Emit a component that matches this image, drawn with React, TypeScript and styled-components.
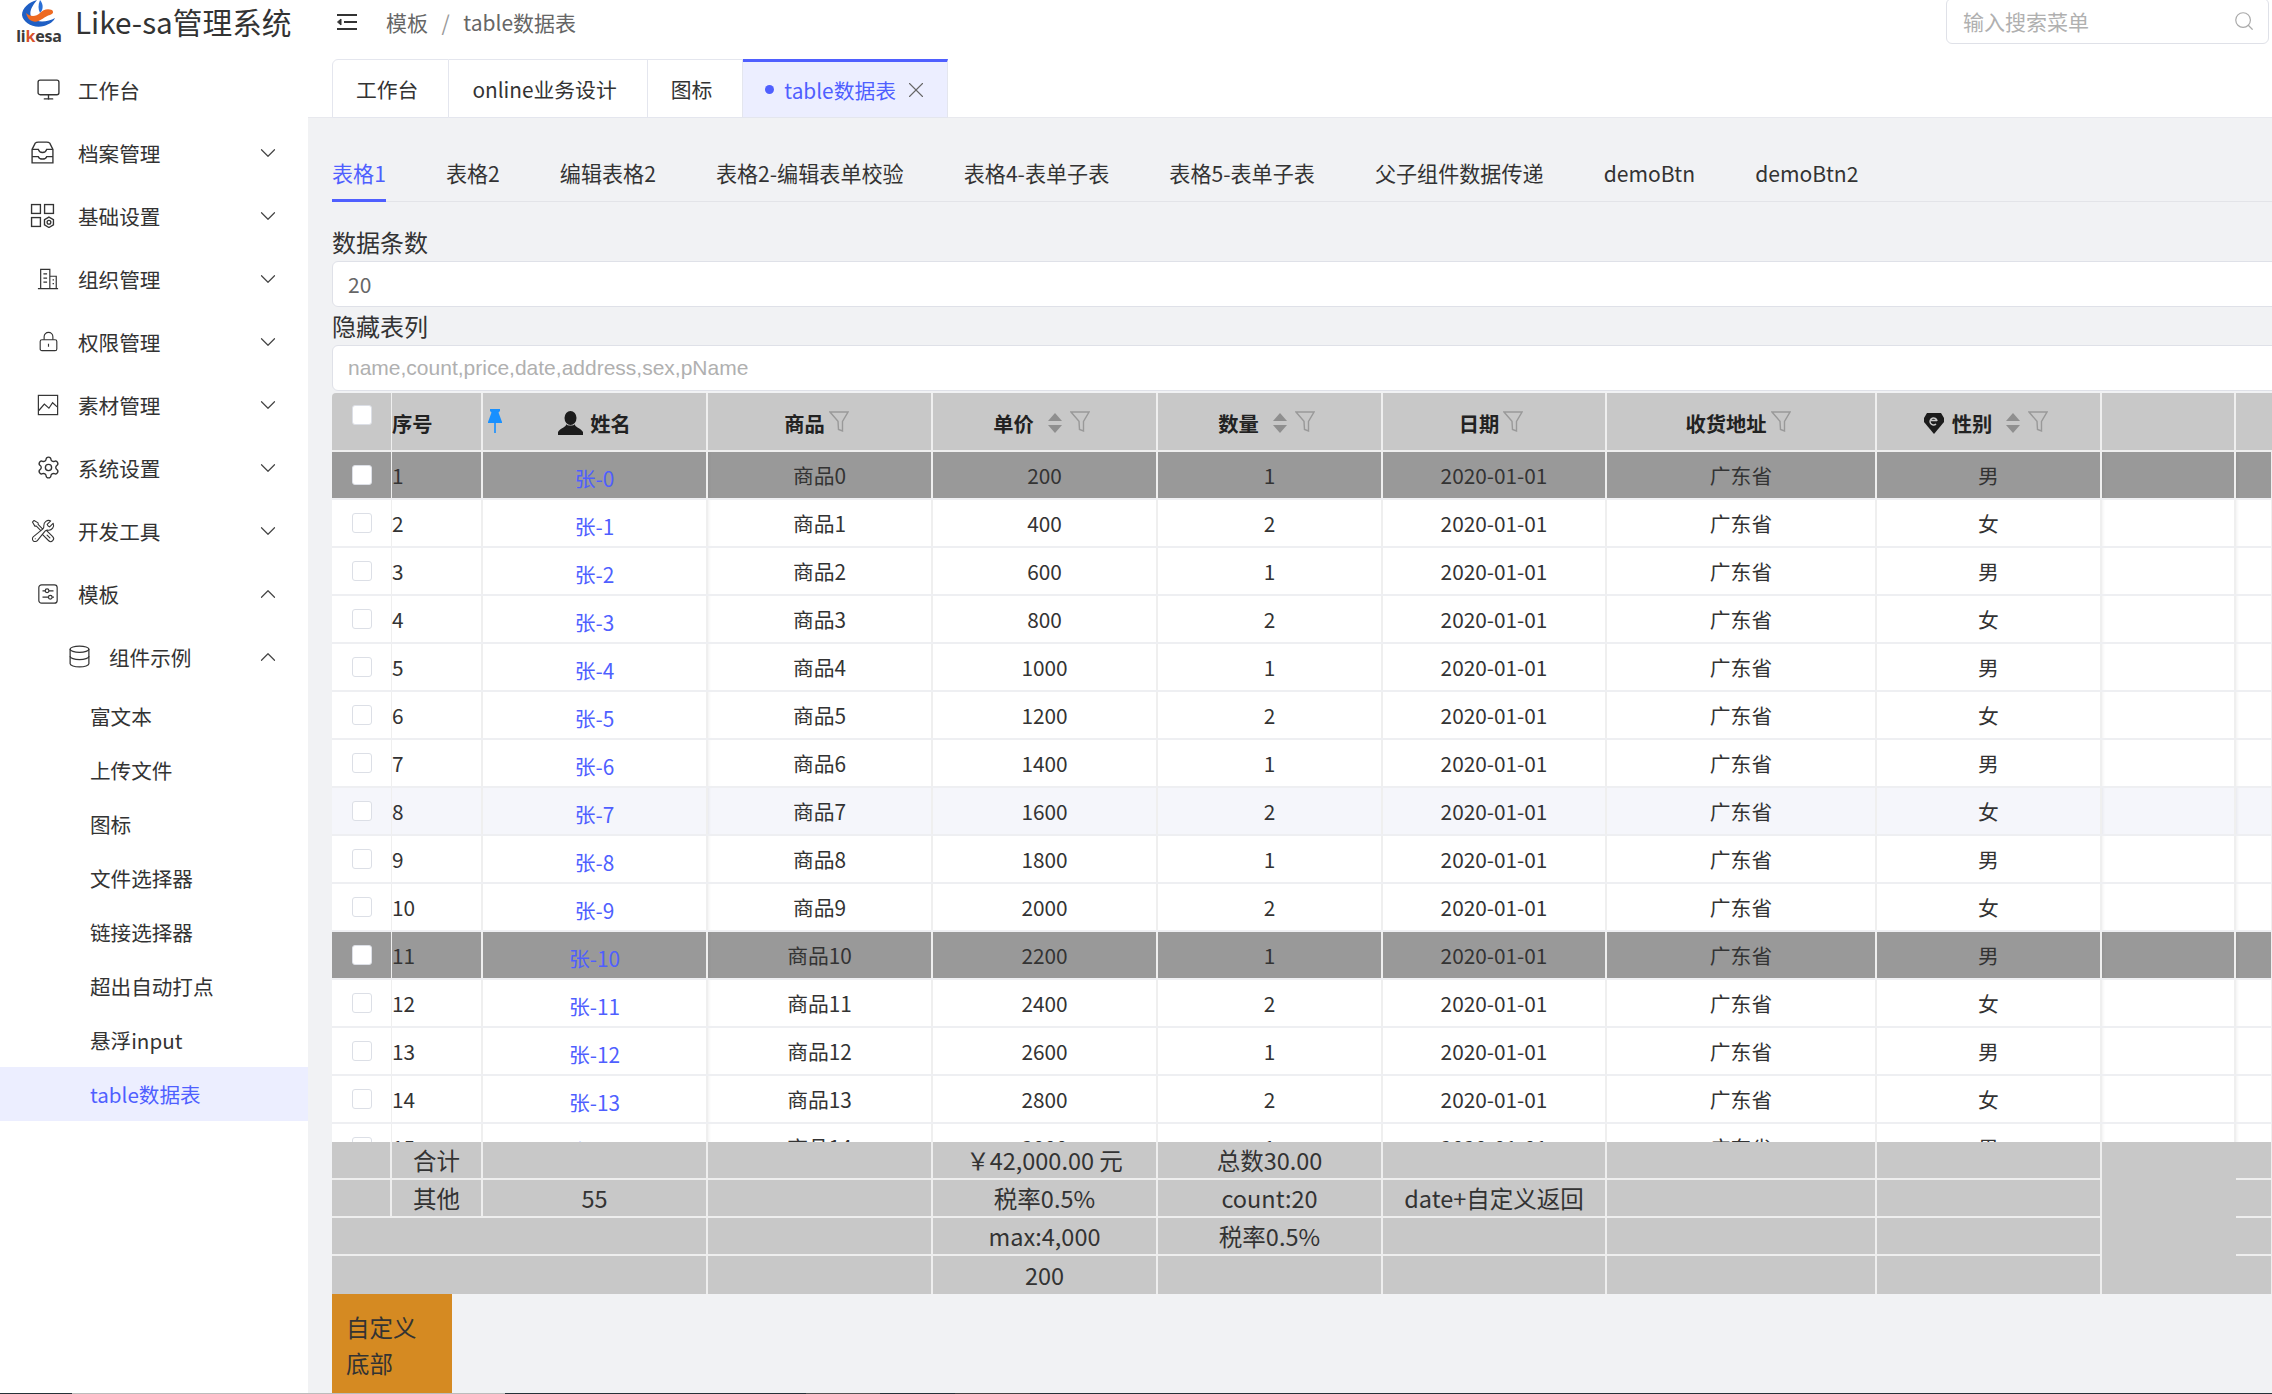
import React from "react";
import styled, { createGlobalStyle, css } from "styled-components";
import { ChevronDown, ChevronUp, Database, Monitor, Search, Settings, X } from "lucide-react";
import { HiOutlineWrenchScrewdriver } from "react-icons/hi2";

const GlobalStyle = createGlobalStyle`
  html, body { margin: 0; padding: 0; background: #fff; }
  * { box-sizing: border-box; }
  body { font-family: "Noto Sans CJK SC", "Noto Sans", sans-serif; color: #333; }
`;

const columns = "60px 91px 225px 225px 225px 225px 224px 270px 225px 134px 37px";

const Page = styled.div`
  width: 2272px;
  height: 1394px;
  overflow: hidden;
  display: flex;
  flex-direction: column;
`;

const Body = styled.div`
  flex: 1;
  min-height: 0;
  display: flex;
`;

const BottomStrip = styled.div`
  height: 1px;
  display: flex;
`;

const StripPart = styled.div<{ $w: number; $c: string }>`
  width: ${(p) => p.$w}px;
  background: ${(p) => p.$c};
`;

/* sidebar */
const Sidebar = styled.aside`
  width: 308px;
  flex-shrink: 0;
  background: #fff;
`;

const Brand = styled.div`
  height: 59px;
  display: flex;
  align-items: flex-start;
  padding-left: 18px;
`;

const LogoBox = styled.div`
  width: 42px;
  display: flex;
  flex-direction: column;
  align-items: center;
`;

const LogoText = styled.div`
  font-family: "Noto Sans", sans-serif;
  font-weight: 700;
  font-size: 16px;
  line-height: 16px;
  letter-spacing: -0.2px;
  color: #3a3a3a;
  span { color: #d8502a; }
`;

const Title = styled.div`
  margin-left: 15px;
  font-size: 29.7px;
  line-height: 44px;
  color: #333;
  white-space: nowrap;
`;

const MenuItem = styled.div<{ $inset: number }>`
  height: 63px;
  display: flex;
  align-items: center;
  padding: 0 27px 2px ${(p) => p.$inset}px;
  font-size: 20.6px;
  color: #333;
`;

const MenuIcon = styled.div<{ $width: number; $pad: number }>`
  width: ${(p) => p.$width}px;
  padding-left: ${(p) => p.$pad}px;
  display: flex;
  align-items: center;
  color: #333;
`;

const MenuLabel = styled.div`
  flex: 1;
`;

const Leaf = styled.div<{ $active?: boolean }>`
  height: 54px;
  display: flex;
  align-items: center;
  padding: 0 0 1px 90px;
  font-size: 20.6px;
  color: ${(p) => (p.$active ? "#4f5fff" : "#333")};
  background: ${(p) => (p.$active ? "#eceeff" : "transparent")};
`;

const Chevron = styled.div`
  display: flex;
  color: #444;
`;

/* right side */
const Main = styled.main`
  flex: 1;
  min-width: 0;
  display: flex;
  flex-direction: column;
  overflow: hidden;
  background: #f1f2f4;
`;

const TopBar = styled.div`
  height: 118px;
  flex-shrink: 0;
  background: #fff;
  border-bottom: 1px solid #e8e9ee;
`;

const TopRow = styled.div`
  height: 59px;
  display: flex;
  align-items: flex-start;
  padding-left: 28px;
`;

const Crumbs = styled.div`
  height: 44px;
  flex: 1;
  display: flex;
  align-items: center;
  padding-bottom: 1px;
  font-size: 21px;
  color: #666;
`;

const CrumbSep = styled.span`
  margin: 0 13.5px;
  color: #999;
`;

const FoldButton = styled.svg`
  margin-right: 28px;
`;

const SearchBox = styled.div`
  width: 323px;
  height: 46px;
  margin: -2px 3px 0 0;
  padding: 0 13px 0 16px;
  background: #fff;
  border: 1px solid #dfe1e8;
  border-radius: 6px;
  display: flex;
  align-items: center;
  justify-content: space-between;
  font-size: 21px;
  color: #b0b0b0;
`;

const PageTabs = styled.div`
  height: 59px;
  margin-left: 24px;
  display: flex;
`;

const PageTab = styled.div<{ $active?: boolean }>`
  display: flex;
  align-items: center;
  padding: 0 30px 0 23px;
  font-size: 20.8px;
  background: #fff;
  border: 1px solid #e4e6ee;
  border-left-width: 0;
  color: #333;
  &:first-child {
    border-left-width: 1px;
    border-top-left-radius: 6px;
  }
  ${(p) =>
    p.$active &&
    css`
      padding: 0 18px 0 22px;
      background: #eceeff;
      color: #4f5fff;
      border-top: 3px solid #4f5fff;
    `}
`;

const Dot = styled.span`
  width: 9px;
  height: 9px;
  margin-right: 10px;
  border-radius: 50%;
  background: #4f5fff;
`;

const TabClose = styled.span`
  display: flex;
  margin-left: 7px;
  color: #666;
`;

const Content = styled.div`
  padding-left: 24px;
  width: 2000px;
`;

const InnerTabs = styled.div`
  height: 56px;
  margin-top: 28px;
  display: flex;
  gap: 60px;
  border-bottom: 1px solid #e3e4e8;
`;

const InnerTab = styled.div<{ $active?: boolean }>`
  height: 56px;
  display: flex;
  align-items: center;
  font-size: 21.1px;
  color: ${(p) => (p.$active ? "#4f5fff" : "#333")};
  border-bottom: 3px solid ${(p) => (p.$active ? "#4f5fff" : "transparent")};
`;

const Form = styled.div`
  margin-top: 25px;
`;

const FieldLabel = styled.div`
  height: 34px;
  line-height: 30px;
  font-size: 24px;
  color: #333;
`;

const FieldBox = styled.div<{ $placeholder?: boolean }>`
  height: 46px;
  margin-bottom: 4px;
  padding-left: 15px;
  display: flex;
  align-items: center;
  background: #fff;
  border: 1px solid #dfe1e8;
  border-radius: 6px;
  font-size: 21px;
  color: #666;
  ${(p) =>
    p.$placeholder &&
    css`
      font-family: "Liberation Sans", Arial, sans-serif;
      color: #b0b0b0;
    `}
`;

/* table */
const TableWrap = styled.div`
  margin-top: -2px;
  width: 1941px;
  font-size: 20.8px;
`;

const HeadRow = styled.div`
  display: grid;
  grid-template-columns: ${columns};
  height: 59px;
  background: #c8c8c8;
  border-bottom: 2px solid #eeeeee;
  border-top-left-radius: 4px;
`;

const HeadCell = styled.div<{ $left?: boolean; $thin?: boolean; $none?: boolean }>`
  position: relative;
  display: flex;
  align-items: center;
  justify-content: ${(p) => (p.$left ? "flex-start" : "center")};
  font-size: 20.3px;
  font-weight: 700;
  color: #222;
  border-right: ${(p) => (p.$none ? "0" : p.$thin ? "1px" : "2px")} solid #efefef;
  padding-top: 2px;
`;

const HeadText = styled.span`
  margin: 0 4px 0 0;
`;

const PinMark = styled.svg`
  position: absolute;
  left: 4px;
  top: 16px;
`;

const HeadGlyph = styled.svg`
  margin-right: 7px;
  flex-shrink: 0;
`;

const SortMark = styled.svg`
  margin: 0 7px 0 13px;
  flex-shrink: 0;
`;

const FilterMark = styled.svg`
  margin: -2px 6px 0 0;
  flex-shrink: 0;
`;

const Rows = styled.div`
  height: 690px;
  overflow: hidden;
`;

const Row = styled.div<{ $selected?: boolean; $hover?: boolean }>`
  display: grid;
  grid-template-columns: ${columns};
  height: 48px;
  border-bottom: 2px solid #eeeff2;
  background: ${(p) => (p.$selected ? "#999999" : p.$hover ? "#f5f6fb" : "#fff")};
`;

const Cell = styled.div<{ $left?: boolean; $thin?: boolean; $shadow?: boolean }>`
  display: flex;
  align-items: center;
  justify-content: ${(p) => (p.$left ? "flex-start" : "center")};
  border-right: ${(p) => (p.$thin ? "1px" : "2px")} solid #efefef;
  color: #333;
  ${(p) => p.$shadow && "box-shadow: inset 3px 0 3px -2px rgba(0, 0, 0, 0.06);"}
`;

const NameLink = styled.a`
  color: #4f5fff;
  padding-top: 5px;
`;

const Check = styled.div<{ $up?: boolean }>`
  width: 20px;
  height: 20px;
  background: #fff;
  border: 1px solid #dcdfe6;
  border-radius: 3px;
  ${(p) => p.$up && "margin-top: -16px;"}
`;

const Footer = styled.div`
  display: grid;
  grid-template-columns: ${columns};
  grid-auto-rows: 38px;
  height: 152px;
  font-size: 23.5px;
  background: #c8c8c8;
  color: #333;
`;

const FootCell = styled.div<{ $span?: number; $rows?: number; $last?: boolean; $bare?: boolean }>`
  display: flex;
  align-items: center;
  justify-content: center;
  grid-column: span ${(p) => p.$span ?? 1};
  grid-row: span ${(p) => p.$rows ?? 1};
  white-space: nowrap;
  border-right: ${(p) => (p.$bare ? "0" : "2px solid #eeeeee")};
  border-bottom: ${(p) => (p.$last || p.$bare ? "0" : "2px solid #eeeeee")};
`;

const CustomFoot = styled.div`
  width: 120px;
  height: 99px;
  padding: 15px 14px 0;
  background: #d58a22;
  font-size: 23.5px;
  line-height: 36px;
  color: #333;
`;

/* drawings */
const MenuGlyph: React.FC<{ children: React.ReactNode; size: number }> = ({ children, size }) => (
  <svg width={size} height={size} viewBox="0 0 24 24" fill="none" stroke="currentColor" strokeWidth="1.3">
    {children}
  </svg>
);

const Logo = () => (
  <svg width="34" height="28" viewBox="0 0 34 28">
    <path d="M15 0C7 2 0 8 0 15c1 8 12 14 22 11 6-2 10-5 11-8-7 4-18 5-23 0C6 13 10 6 15 0Z" fill="#1f5fc4" />
    <path d="M18 0c-2 5-2 9 0 13 3-3 4-8 0-13Z" fill="#2a6fd6" />
    <path d="M4 13c4 4 10 4 14 0 3-3 7-5 12-3 2 2 1 4-2 5-6 1-11 9-18 6-3-1-5-4-6-8Z" fill="#ee6a22" />
  </svg>
);

const FilterIcon = () => (
  <FilterMark width="20" height="22" viewBox="0 0 20 22" fill="none" stroke="#999" strokeWidth="1.4">
    <path d="M1 1h18l-5.500 9.500V20l-4-1.600-.5-8z" />
  </FilterMark>
);

const SortIcon = () => (
  <SortMark width="16" height="22" viewBox="0 0 16 22" fill="#8f8f8f">
    <path d="M8 1l7 8H1z" />
    <path d="M8 21l7-8H1z" />
  </SortMark>
);

const menuTop = [
  {
    label: "工作台",
    pad: 6,
    icon: <Monitor size={25} strokeWidth={1.3} />,
    plain: true,
  },
  {
    label: "档案管理",
    pad: 0,
    icon: (
      <MenuGlyph size={25}>
        <path d="M2 9l3-6c1-1 2-1 3-1h8c1 0 2 0 3 1l3 6v13H2z" />
        <path d="M2 9h6c1 4 7 4 8 0h6M2 16h6c1 3 7 3 8 0h6" />
      </MenuGlyph>
    ),
  },
  {
    label: "基础设置",
    pad: 0,
    icon: (
      <MenuGlyph size={25}>
        <rect x="1.5" y="1.5" width="8.5" height="8.5" />
        <rect x="14" y="1.5" width="8.5" height="8.5" />
        <rect x="1.5" y="14" width="8.5" height="8.5" />
        <path d="M18.2 13.5l4.3 2.5v5l-4.3 2.5-4.3-2.5v-5z" />
        <circle cx="18.2" cy="18.5" r="1.8" />
      </MenuGlyph>
    ),
  },
  {
    label: "组织管理",
    pad: 7,
    icon: (
      <MenuGlyph size={22}>
        <path d="M1 22.5h22M4 22.5V1.5h10v21M14 9h7v13.5" />
        <path d="M7 6.5h4M7 11h4M7 15.5h4M17 13h1.5M17 17h1.5" />
      </MenuGlyph>
    ),
  },
  {
    label: "权限管理",
    pad: 8,
    icon: (
      <MenuGlyph size={21}>
        <rect x="2.5" y="10" width="19" height="12.5" rx="2" />
        <path d="M7 10V6.500a5 5 0 0 1 10 0V10M12 14.500v3.500" />
      </MenuGlyph>
    ),
  },
  {
    label: "素材管理",
    pad: 7,
    icon: (
      <MenuGlyph size={22}>
        <rect x="1.5" y="1.5" width="21" height="21" />
        <path d="M2 18l6-7 5 4.500 4-6 5 4.500" />
      </MenuGlyph>
    ),
  },
  { label: "系统设置", pad: 6, icon: <Settings size={25} strokeWidth={1.3} /> },
  { label: "开发工具", pad: 0, icon: <HiOutlineWrenchScrewdriver size={26} strokeWidth={1} /> },
];

const leaves = ["富文本", "上传文件", "图标", "文件选择器", "链接选择器", "超出自动打点", "悬浮input", "table数据表"];
const innerTabs = ["表格1", "表格2", "编辑表格2", "表格2-编辑表单校验", "表格4-表单子表", "表格5-表单子表", "父子组件数据传递", "demoBtn", "demoBtn2"];
const rowData = Array.from({ length: 15 }, (_, i) => i);
const stripParts: [number, string][] = [
  [72, "#263238"],
  [433, "#bcbcbc"],
  [301, "#263238"],
  [74, "#555"],
  [75, "#263238"],
  [75, "#444"],
  [1242, "#263238"],
];

export default function App() {
  return (
    <Page>
      <GlobalStyle />
      <Body>
        <Sidebar>
          <Brand>
            <LogoBox>
              <Logo />
              <LogoText>
                li<span>k</span>esa
              </LogoText>
            </LogoBox>
            <Title>Like-sa管理系统</Title>
          </Brand>
          {menuTop.map((m) => (
            <MenuItem key={m.label} $inset={30}>
              <MenuIcon $width={48} $pad={m.pad}>
                {m.icon}
              </MenuIcon>
              <MenuLabel>{m.label}</MenuLabel>
              {!m.plain && (
                <Chevron>
                  <ChevronDown size={26} strokeWidth={1.1} />
                </Chevron>
              )}
            </MenuItem>
          ))}
          <MenuItem $inset={30}>
            <MenuIcon $width={48} $pad={7}>
              <MenuGlyph size={22}>
                <rect x="2" y="2" width="20" height="20" rx="3" />
                <path d="M6 8.500h3M13 8.500h5M6 15.500h6M16.500 15.500h2" />
                <circle cx="11" cy="8.500" r="2" />
                <circle cx="14.500" cy="15.500" r="2" />
              </MenuGlyph>
            </MenuIcon>
            <MenuLabel>模板</MenuLabel>
            <Chevron>
              <ChevronUp size={26} strokeWidth={1.1} />
            </Chevron>
          </MenuItem>
          <MenuItem $inset={67}>
            <MenuIcon $width={42} $pad={0}>
              <Database size={25} strokeWidth={1.2} />
            </MenuIcon>
            <MenuLabel>组件示例</MenuLabel>
            <Chevron>
              <ChevronUp size={26} strokeWidth={1.1} />
            </Chevron>
          </MenuItem>
          {leaves.map((l, i) => (
            <Leaf key={l} $active={i === leaves.length - 1}>
              {l}
            </Leaf>
          ))}
        </Sidebar>
        <Main>
          <TopBar>
            <TopRow>
              <Crumbs>
                <FoldButton width="22" height="18" viewBox="0 0 22 18" fill="none" stroke="#333" strokeWidth="2">
                  <path d="M1 2h20M8 9h13M1 16h20" />
                  <path d="M5 6L1.500 9 5 12z" fill="#333" strokeWidth="1" />
                </FoldButton>
                模板<CrumbSep>/</CrumbSep>table数据表
              </Crumbs>
              <SearchBox>
                输入搜索菜单
                <Search size={22} strokeWidth={1.3} color="#aaa" />
              </SearchBox>
            </TopRow>
            <PageTabs>
              <PageTab>工作台</PageTab>
              <PageTab>online业务设计</PageTab>
              <PageTab>图标</PageTab>
              <PageTab $active>
                <Dot />
                table数据表
                <TabClose>
                  <X size={26} strokeWidth={1} />
                </TabClose>
              </PageTab>
            </PageTabs>
          </TopBar>
          <Content>
            <InnerTabs>
              {innerTabs.map((t, i) => (
                <InnerTab key={t} $active={i === 0}>
                  {t}
                </InnerTab>
              ))}
            </InnerTabs>
            <Form>
              <FieldLabel>数据条数</FieldLabel>
              <FieldBox>20</FieldBox>
              <FieldLabel>隐藏表列</FieldLabel>
              <FieldBox $placeholder>name,count,price,date,address,sex,pName</FieldBox>
            </Form>
            <TableWrap>
              <HeadRow>
                <HeadCell $thin>
                  <Check $up />
                </HeadCell>
                <HeadCell $left>序号</HeadCell>
                <HeadCell>
                  <PinMark width="16" height="24" viewBox="0 0 16 24" fill="#1890ff">
                    <path d="M3 0h10v2l-1.500 1.500L15 13v1H1v-1l3.500-9.500L3 2z" />
                    <rect x="7.200" y="13" width="1.600" height="11" />
                  </PinMark>
                  <HeadGlyph width="25" height="24" viewBox="0 0 25 24" fill="#1c1c1c">
                    <ellipse cx="12.500" cy="7" rx="6" ry="7" />
                    <path d="M8 13c1 3-6 4-8 8v3h25v-3c-2-4-9-5-8-8-1 2-8 2-9 0z" />
                  </HeadGlyph>
                  姓名
                </HeadCell>
                <HeadCell>
                  <HeadText>商品</HeadText>
                  <FilterIcon />
                </HeadCell>
                <HeadCell>
                  单价
                  <SortIcon />
                  <FilterIcon />
                </HeadCell>
                <HeadCell>
                  数量
                  <SortIcon />
                  <FilterIcon />
                </HeadCell>
                <HeadCell>
                  <HeadText>日期</HeadText>
                  <FilterIcon />
                </HeadCell>
                <HeadCell>
                  <HeadText>收货地址</HeadText>
                  <FilterIcon />
                </HeadCell>
                <HeadCell>
                  <HeadGlyph width="22" height="24" viewBox="0 0 22 24" fill="#1c1c1c">
                    <path d="M4 2h14l3 5v4L11 23 1 11V7z" />
                    <path d="M14 10a3.500 3.500 0 1 0-1 3M8 9.500h6" fill="none" stroke="#c8c8c8" strokeWidth="1.500" />
                  </HeadGlyph>
                  性别
                  <SortIcon />
                  <FilterIcon />
                </HeadCell>
                <HeadCell />
                <HeadCell $none />
              </HeadRow>
              <Rows>
                {rowData.map((i) => (
                  <Row key={i} $selected={i % 10 === 0 && i < 11} $hover={i === 7}>
                    <Cell $thin>
                      <Check />
                    </Cell>
                    <Cell $left>{i + 1}</Cell>
                    <Cell>
                      <NameLink>张-{i}</NameLink>
                    </Cell>
                    <Cell $shadow>商品{i}</Cell>
                    <Cell>{(i + 1) * 200}</Cell>
                    <Cell>{i % 2 === 0 ? 1 : 2}</Cell>
                    <Cell>2020-01-01</Cell>
                    <Cell>广东省</Cell>
                    <Cell>{i % 2 === 0 ? "男" : "女"}</Cell>
                    <Cell $shadow />
                    <Cell $shadow />
                  </Row>
                ))}
              </Rows>
              <Footer>
                <FootCell />
                <FootCell>合计</FootCell>
                <FootCell />
                <FootCell />
                <FootCell>￥42,000.00 元</FootCell>
                <FootCell>总数30.00</FootCell>
                <FootCell />
                <FootCell />
                <FootCell />
                <FootCell $rows={4} $bare />
                <FootCell />

                <FootCell />
                <FootCell>其他</FootCell>
                <FootCell>55</FootCell>
                <FootCell />
                <FootCell>税率0.5%</FootCell>
                <FootCell>count:20</FootCell>
                <FootCell>date+自定义返回</FootCell>
                <FootCell />
                <FootCell />
                <FootCell />

                <FootCell $span={3} />
                <FootCell />
                <FootCell>max:4,000</FootCell>
                <FootCell>税率0.5%</FootCell>
                <FootCell />
                <FootCell />
                <FootCell />
                <FootCell />

                <FootCell $span={3} $last />
                <FootCell $last />
                <FootCell $last>200</FootCell>
                <FootCell $last />
                <FootCell $last />
                <FootCell $last />
                <FootCell $last />
                <FootCell $last />
              </Footer>
              <CustomFoot>自定义底部</CustomFoot>
            </TableWrap>
          </Content>
        </Main>
      </Body>
      <BottomStrip>
        {stripParts.map(([w, c], i) => (
          <StripPart key={i} $w={w} $c={c} />
        ))}
      </BottomStrip>
    </Page>
  );
}
